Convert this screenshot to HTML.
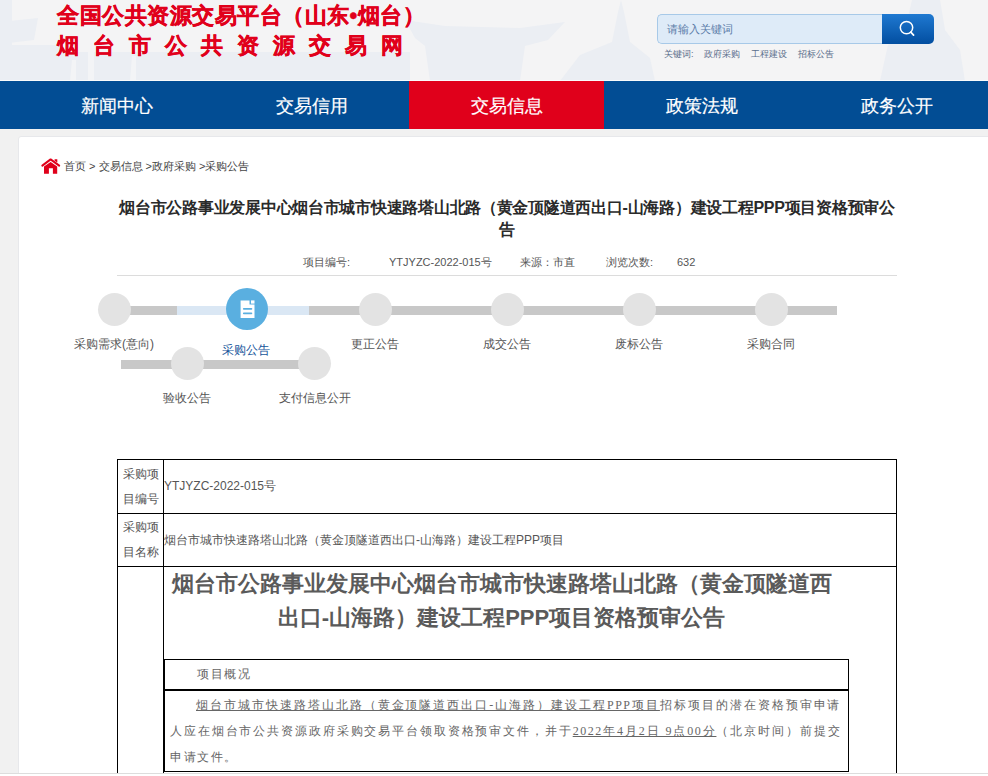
<!DOCTYPE html>
<html><head><meta charset="utf-8">
<style>
*{margin:0;padding:0;box-sizing:border-box}
html,body{width:988px;height:776px;overflow:hidden;background:#f1f1f1;font-family:"Liberation Sans",sans-serif;color:#333}
.abs{position:absolute}
#hdr{position:absolute;left:0;top:0;width:988px;height:81px;background:#f4f4f5;overflow:hidden}
#logo1{position:absolute;left:57px;top:1px;font-size:22px;font-weight:900;color:#e1001b;white-space:nowrap;line-height:30px;letter-spacing:0.5px;-webkit-text-stroke:0.45px #e1001b}
#logo2{position:absolute;left:57px;top:31px;font-size:22px;font-weight:900;color:#e1001b;white-space:nowrap;line-height:30px;letter-spacing:14px;-webkit-text-stroke:0.45px #e1001b}
#search{position:absolute;left:657px;top:14px;width:277px;height:30px}
#sinput{position:absolute;left:0;top:0;width:226px;height:30px;background:#deebf8;border:1px solid #a7c9e8;border-right:none;border-radius:5px 0 0 5px;font-size:11px;color:#5b7ca8;line-height:28px;padding-left:9px}
#sbtn{position:absolute;left:225px;top:0;width:52px;height:30px;background:linear-gradient(#1f79d1,#024ea0);border-radius:0 5px 5px 0}
.kw{position:absolute;left:664px;top:47px;font-size:9px;color:#5a6d8b;white-space:nowrap;line-height:14px}
#nav{position:absolute;left:0;top:81px;width:988px;height:48px;background:#024d94}
#nav div{position:absolute;top:0;width:195px;height:48px;line-height:50px;text-align:center;color:#fff;font-size:18px;-webkit-text-stroke:0.2px #fff}
#nav .on{background:#e0001b}
#box{position:absolute;left:18px;top:136px;width:990px;height:700px;background:#fff;border:1px solid #e7e8eb;border-radius:3px}
#crumb{position:absolute;left:64px;top:158px;font-size:11px;color:#444;white-space:nowrap;line-height:16px}
#title{position:absolute;left:17px;top:197px;width:980px;text-align:center;font-size:16px;font-weight:bold;color:#2a2a2a;line-height:22px;white-space:nowrap;letter-spacing:-0.27px}
.meta{position:absolute;top:254px;font-size:11px;color:#555;line-height:16px;white-space:nowrap}
#sep{position:absolute;left:117px;top:275px;width:780px;height:1px;background:#dcdcdc}
.bar{position:absolute;height:9px;background:#c8c8c8}
.dot{position:absolute;width:33px;height:33px;border-radius:50%;background:#e3e3e3}
.lbl{position:absolute;font-size:12px;color:#555;white-space:nowrap;line-height:14px;text-align:center;width:140px}
#tbl{position:absolute;left:117px;top:459px;width:780px;border-collapse:collapse}
#tbl td{border:1px solid #000;font-size:12px;color:#555;padding:0;vertical-align:middle}
</style></head><body>
<div id="hdr">
<svg class="abs" style="left:0;top:0" width="988" height="81">
<g fill="#ebeef3">
<path d="M0 0 L12 0 L12 81 L0 81Z"/>
<path d="M0 22 L38 18 L34 40 L0 44Z"/>
<path d="M0 45 L60 45 L60 81 L0 81Z"/>
<path d="M60 52 L410 52 L410 81 L60 81Z"/>
<path d="M405 20 L445 26 L520 28 L565 22 L548 40 L525 46 L520 81 L430 81 L425 46 L415 38Z"/>
<path d="M560 81 L580 55 L612 42 L618 12 L621 0 L624 12 L630 42 L650 58 L655 81Z"/>
<path d="M880 81 L888 45 L905 30 L912 0 L940 0 L945 30 L960 50 L965 81Z"/>
</g>
<g fill="#f3f4f6">
<path d="M88 52 L94 52 L94 81 L88 81Z"/>
<path d="M70 81 L72 60 L76 60 L76 81Z"/>
<path d="M130 81 L132 56 L136 56 L136 81Z"/>
</g>
</svg>
<div id="logo1">全国公共资源交易平台（山东•烟台）</div>
<div id="logo2">烟台市公共资源交易网</div>
<div id="search"><div id="sinput">请输入关键词</div><div id="sbtn">
<svg class="abs" style="left:0;top:0" width="52" height="30"><circle cx="24.5" cy="13.6" r="6.2" fill="none" stroke="#fff" stroke-width="1.5"/><path d="M28.8 18.1 L31.6 21.1" stroke="#fff" stroke-width="1.7" stroke-linecap="round"/></svg>
</div></div>
<div class="kw" style="left:664px">关键词:</div><div class="kw" style="left:704px">政府采购</div><div class="kw" style="left:751px">工程建设</div><div class="kw" style="left:798px">招标公告</div>
</div>
<div class="abs" style="left:0;top:80px;width:988px;height:1px;background:#fafbfc"></div>
<div id="nav">
<div style="left:19px">新闻中心</div>
<div style="left:214px">交易信用</div>
<div class="on" style="left:409px">交易信息</div>
<div style="left:604px">政策法规</div>
<div style="left:799px">政务公开</div>
</div>
<div id="box"></div>
<svg class="abs" style="left:38px;top:152px" width="25" height="25" viewBox="0 0 25 25">
<path d="M4.3 13.6 L12.6 7.4 L21.2 13.6" fill="none" stroke="#e0001b" stroke-width="2" stroke-linecap="round" stroke-linejoin="round"/>
<path d="M6 14.6 L12.6 9.9 L19.2 14.6 L19.2 21.8 L14.9 21.8 L14.9 16.2 L10.9 16.2 L10.9 21.8 L6 21.8Z" fill="#e0001b"/>
<path d="M16.6 7.2 L19.3 7.2 L19.3 10.6 L16.6 8.7Z" fill="#e0001b"/>
</svg>
<div id="crumb">首页 &gt; 交易信息 &gt;政府采购 &gt;采购公告</div>
<div id="title"><div>烟台市公路事业发展中心烟台市城市快速路塔山北路（黄金顶隧道西出口-山海路）建设工程PPP项目资格预审公</div><div>告</div></div>
<div class="meta" style="left:303px">项目编号:</div>
<div class="meta" style="left:389px">YTJYZC-2022-015号</div>
<div class="meta" style="left:520px">来源：市直</div>
<div class="meta" style="left:606px">浏览次数:</div>
<div class="meta" style="left:677px">632</div>
<div id="sep"></div>

<!-- steps row 1 -->
<div class="bar" style="left:114px;top:306px;width:63px"></div>
<div class="bar" style="left:177px;top:306px;width:132px;background:#dae7f4"></div>
<div class="bar" style="left:309px;top:306px;width:528px"></div>
<div class="dot" style="left:98px;top:293px"></div>
<div class="abs" style="left:226px;top:288px;width:42px;height:42px;border-radius:50%;background:#5aafe0"></div>
<svg class="abs" style="left:238px;top:298px" width="20" height="22" viewBox="0 0 20 22">
<path d="M2.6 2.4 L11.5 2.4 L11.5 6.6 L16.5 6.6 L16.5 20 L2.6 20Z" fill="#fff"/>
<path d="M13 2.4 L16.5 2.4 L16.5 5.6 L13 5.6Z" fill="#fff"/>
<path d="M5.8 10.8 L13.4 10.8 M5.8 15.3 L13.4 15.3" stroke="#5aafe0" stroke-width="1.8" stroke-linecap="round"/>
</svg>
<div class="dot" style="left:359px;top:293px"></div>
<div class="dot" style="left:491px;top:293px"></div>
<div class="dot" style="left:623px;top:293px"></div>
<div class="dot" style="left:755px;top:293px"></div>
<div class="lbl" style="left:44px;top:337px">采购需求(意向)</div>
<div class="lbl" style="left:176px;top:343px;color:#15549a">采购公告</div>
<div class="lbl" style="left:305px;top:337px">更正公告</div>
<div class="lbl" style="left:437px;top:337px">成交公告</div>
<div class="lbl" style="left:569px;top:337px">废标公告</div>
<div class="lbl" style="left:701px;top:337px">采购合同</div>
<!-- steps row 2 -->
<div class="bar" style="left:121px;top:360px;width:193px"></div>
<div class="dot" style="left:171px;top:347px"></div>
<div class="dot" style="left:298px;top:347px"></div>
<div class="lbl" style="left:117px;top:391px">验收公告</div>
<div class="lbl" style="left:245px;top:391px">支付信息公开</div>

<table id="tbl">
<tr style="height:54px"><td style="width:46px;line-height:25px;text-align:center">采购项<br>目编号</td><td>YTJYZC-2022-015号</td></tr>
<tr style="height:53px"><td style="line-height:25px;text-align:center">采购项<br>目名称</td><td>烟台市城市快速路塔山北路（黄金顶隧道西出口-山海路）建设工程PPP项目</td></tr>
<tr style="height:300px"><td></td><td style="vertical-align:top"></td></tr>
</table>
<div class="abs" style="left:163px;top:567px;width:677px;text-align:center;font-size:22px;font-weight:bold;color:#5a5a5a;line-height:34px">烟台市公路事业发展中心烟台市城市快速路塔山北路（黄金顶隧道西<br>出口-山海路）建设工程PPP项目资格预审公告</div>
<div class="abs" style="left:164px;top:659px;width:685px;height:113px;border:1px solid #000"></div>
<div class="abs" style="left:164px;top:689px;width:685px;height:2px;background:#000"></div>
<div class="abs" style="left:197px;top:666px;font-size:12px;color:#666;letter-spacing:1.5px;line-height:16px;font-family:'Liberation Serif',serif">项目概况</div>
<div class="abs" style="left:170px;top:692px;width:671px;font-size:12px;color:#666;line-height:26px;letter-spacing:1.5px;white-space:nowrap;font-family:'Liberation Serif',serif">
<div style="text-align:justify;text-align-last:justify;padding-left:26px">&#8203;<u>烟台市城市快速路塔山北路（黄金顶隧道西出口-山海路）建设工程PPP项目</u>招标项目的潜在资格预审申请</div>
<div style="text-align:justify;text-align-last:justify">人应在烟台市公共资源政府采购交易平台领取资格预审文件，并于<u>2022年4月2日 9点00分</u>（北京时间）前提交</div>
<div>申请文件。</div></div>
<div class="abs" style="left:0;top:773px;width:988px;height:1px;background:#dddddd"></div>
<div class="abs" style="left:0;top:774px;width:988px;height:2px;background:#fff"></div>
</body></html>
